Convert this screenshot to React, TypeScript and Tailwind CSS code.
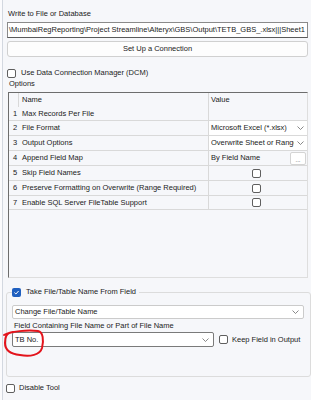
import React from 'react';

const Chevron = () => (
  <svg width="7" height="4" viewBox="0 0 7 4" className="shrink-0">
    <path d="M0.5 0.5 L3.5 3.5 L6.5 0.5" fill="none" stroke="#6b6b6b" strokeWidth="0.8" />
  </svg>
);

const Box = ({ checked = false }: { checked?: boolean }) =>
  checked ? (
    <span className="flex h-[9px] w-[9px] shrink-0 items-center justify-center rounded-[2px] bg-[#1f5fbf]">
      <svg width="7" height="7" viewBox="0 0 7 7">
        <path d="M1.4 3.6 L2.9 5 L5.6 2" fill="none" stroke="#fff" strokeWidth="1" />
      </svg>
    </span>
  ) : (
    <span className="block h-[9px] w-[9px] shrink-0 rounded-[2px] border border-[#5f5f5f] bg-white" />
  );

type Row = { n: number; name: string; kind: 'select' | 'button' | 'check'; value?: string };

const rows: Row[] = [
  { n: 2, name: 'File Format', kind: 'select', value: 'Microsoft Excel (*.xlsx)' },
  { n: 3, name: 'Output Options', kind: 'select', value: 'Overwrite Sheet or Range' },
  { n: 4, name: 'Append Field Map', kind: 'button', value: 'By Field Name' },
  { n: 5, name: 'Skip Field Names', kind: 'check' },
  { n: 6, name: 'Preserve Formatting on Overwrite (Range Required)', kind: 'check' },
  { n: 7, name: 'Enable SQL Server FileTable Support', kind: 'check' },
];

export default function App() {
  return (
    <div
      className="relative flex h-[400px] w-[311px] overflow-hidden bg-[#f6f7fa] text-[7.5px] leading-[10px] text-[#1b1b1b]"
      style={{ fontFamily: '"Liberation Sans", Arial, sans-serif' }}
    >
      <div className="w-[2px] shrink-0 bg-[#fbfbfd]" />
      <div className="flex flex-1 flex-col border-l border-[#d3d8e0] pl-[3px] pt-[9px]">
        <div className="ml-[2px] h-[10px]">Write to File or Database</div>

        <div className="ml-[1px] mt-[3px] flex h-[16px] w-[301px] items-center overflow-hidden whitespace-nowrap border border-[#8a8a8a] border-b-[#5a5a5a] bg-white pl-[1px]">
          \MumbaiRegReporting\Project Streamline\Alteryx\GBS\Output\TETB_GBS_.xlsx|||Sheet1
        </div>

        <div className="ml-[1px] mt-[3px] flex h-[16px] w-[301px] items-center justify-center rounded-[3px] border border-[#d0d0d0] bg-[#fdfdfd]">
          Set Up a Connection
        </div>

        <div className="ml-[1px] mt-[11px] flex h-[10px] items-center gap-[5px]">
          <Box />
          <span>Use Data Connection Manager (DCM)</span>
        </div>

        <div className="ml-[3px] mt-[1px] h-[10px]">Options</div>

        <div className="ml-[2px] mt-[3px] flex h-[186px] w-[300px] flex-col border border-[#6d6d6d] border-b-[#dedede] border-r-[#dedede]">
          <div className="flex h-[14px]">
            <div className="w-[10px] border-r border-[#d9d9d9]" />
            <div className="flex w-[190px] items-center border-r border-[#d9d9d9] pl-[3px]">Name</div>
            <div className="flex flex-1 items-center pl-[2px]">Value</div>
          </div>
          <div className="flex h-[13px]">
            <div className="flex w-[10px] items-center pl-[4px]">1</div>
            <div className="flex w-[190px] items-center border-r border-[#d9d9d9] pl-[3px]">Max Records Per File</div>
            <div className="flex-1" />
          </div>
          {rows.map((r) => (
            <div key={r.n} className="flex h-[15px] border-t border-[#d9d9d9] last:border-b">
              <div className="flex w-[10px] items-center pl-[4px]">{r.n}</div>
              <div className="flex w-[190px] items-center border-r border-[#d9d9d9] pl-[3px] whitespace-nowrap">{r.name}</div>
              {r.kind === 'select' && (
                <div className="flex min-w-0 flex-1 items-center gap-[3px] bg-white pl-[2px] pr-[3px]">
                  <span className="min-w-0 flex-1 overflow-hidden whitespace-nowrap">{r.value}</span>
                  <Chevron />
                </div>
              )}
              {r.kind === 'button' && (
                <div className="flex flex-1 items-center justify-between pl-[2px] pr-[1px]">
                  <span>{r.value}</span>
                  <span className="flex h-[13px] w-[16px] items-end justify-center rounded-[2px] border border-[#d4d4d4] bg-white pb-[1px] text-[6px] leading-[6px] text-[#444]">
                    ...
                  </span>
                </div>
              )}
              {r.kind === 'check' && (
                <div className="flex flex-1 items-center justify-center pr-[4px]">
                  <Box />
                </div>
              )}
            </div>
          ))}
        </div>

        <fieldset className="mt-[9px] w-[305px] rounded-[3px] border border-[#dcdcdc] px-[5px] pb-[29px]">
          <legend className="flex h-[10px] items-center gap-[5px] pr-[3px]">
            <Box checked />
            <span>Take File/Table Name From Field</span>
          </legend>
          <div className="mt-[8px] flex h-[14px] w-[292px] items-center rounded-[2px] border border-[#cbcbcb] bg-white pl-[2px] pr-[4px]">
            <span className="flex-1">Change File/Table Name</span>
            <Chevron />
          </div>
          <div className="ml-[2px] mt-[2px] h-[10px]">Field Containing File Name or Part of File Name</div>
          <div className="mt-[1px] flex items-center gap-[5px]">
            <div className="flex h-[15px] w-[202px] items-center rounded-[2px] border border-[#7a7a7a] bg-white pl-[2px] pr-[4px]">
              <span className="flex-1">TB No.</span>
              <Chevron />
            </div>
            <Box />
            <span className="-ml-[1px]">Keep Field in Output</span>
          </div>
        </fieldset>

        <div className="mt-[6px] flex h-[10px] items-center gap-[4px]">
          <Box />
          <span>Disable Tool</span>
        </div>
      </div>

      <svg className="pointer-events-none absolute left-0 top-0" width="311" height="400" viewBox="0 0 311 400">
        <path
          d="M4 335 C10 331 28 330 38 331 C43 332 44 340 42 348 C40 355 30 357 20 355 C10 354 5 350 5 343 C5 337 6 333 13 332"
          fill="none"
          stroke="#e3141c"
          strokeWidth="2"
          strokeLinecap="round"
        />
      </svg>
    </div>
  );
}
